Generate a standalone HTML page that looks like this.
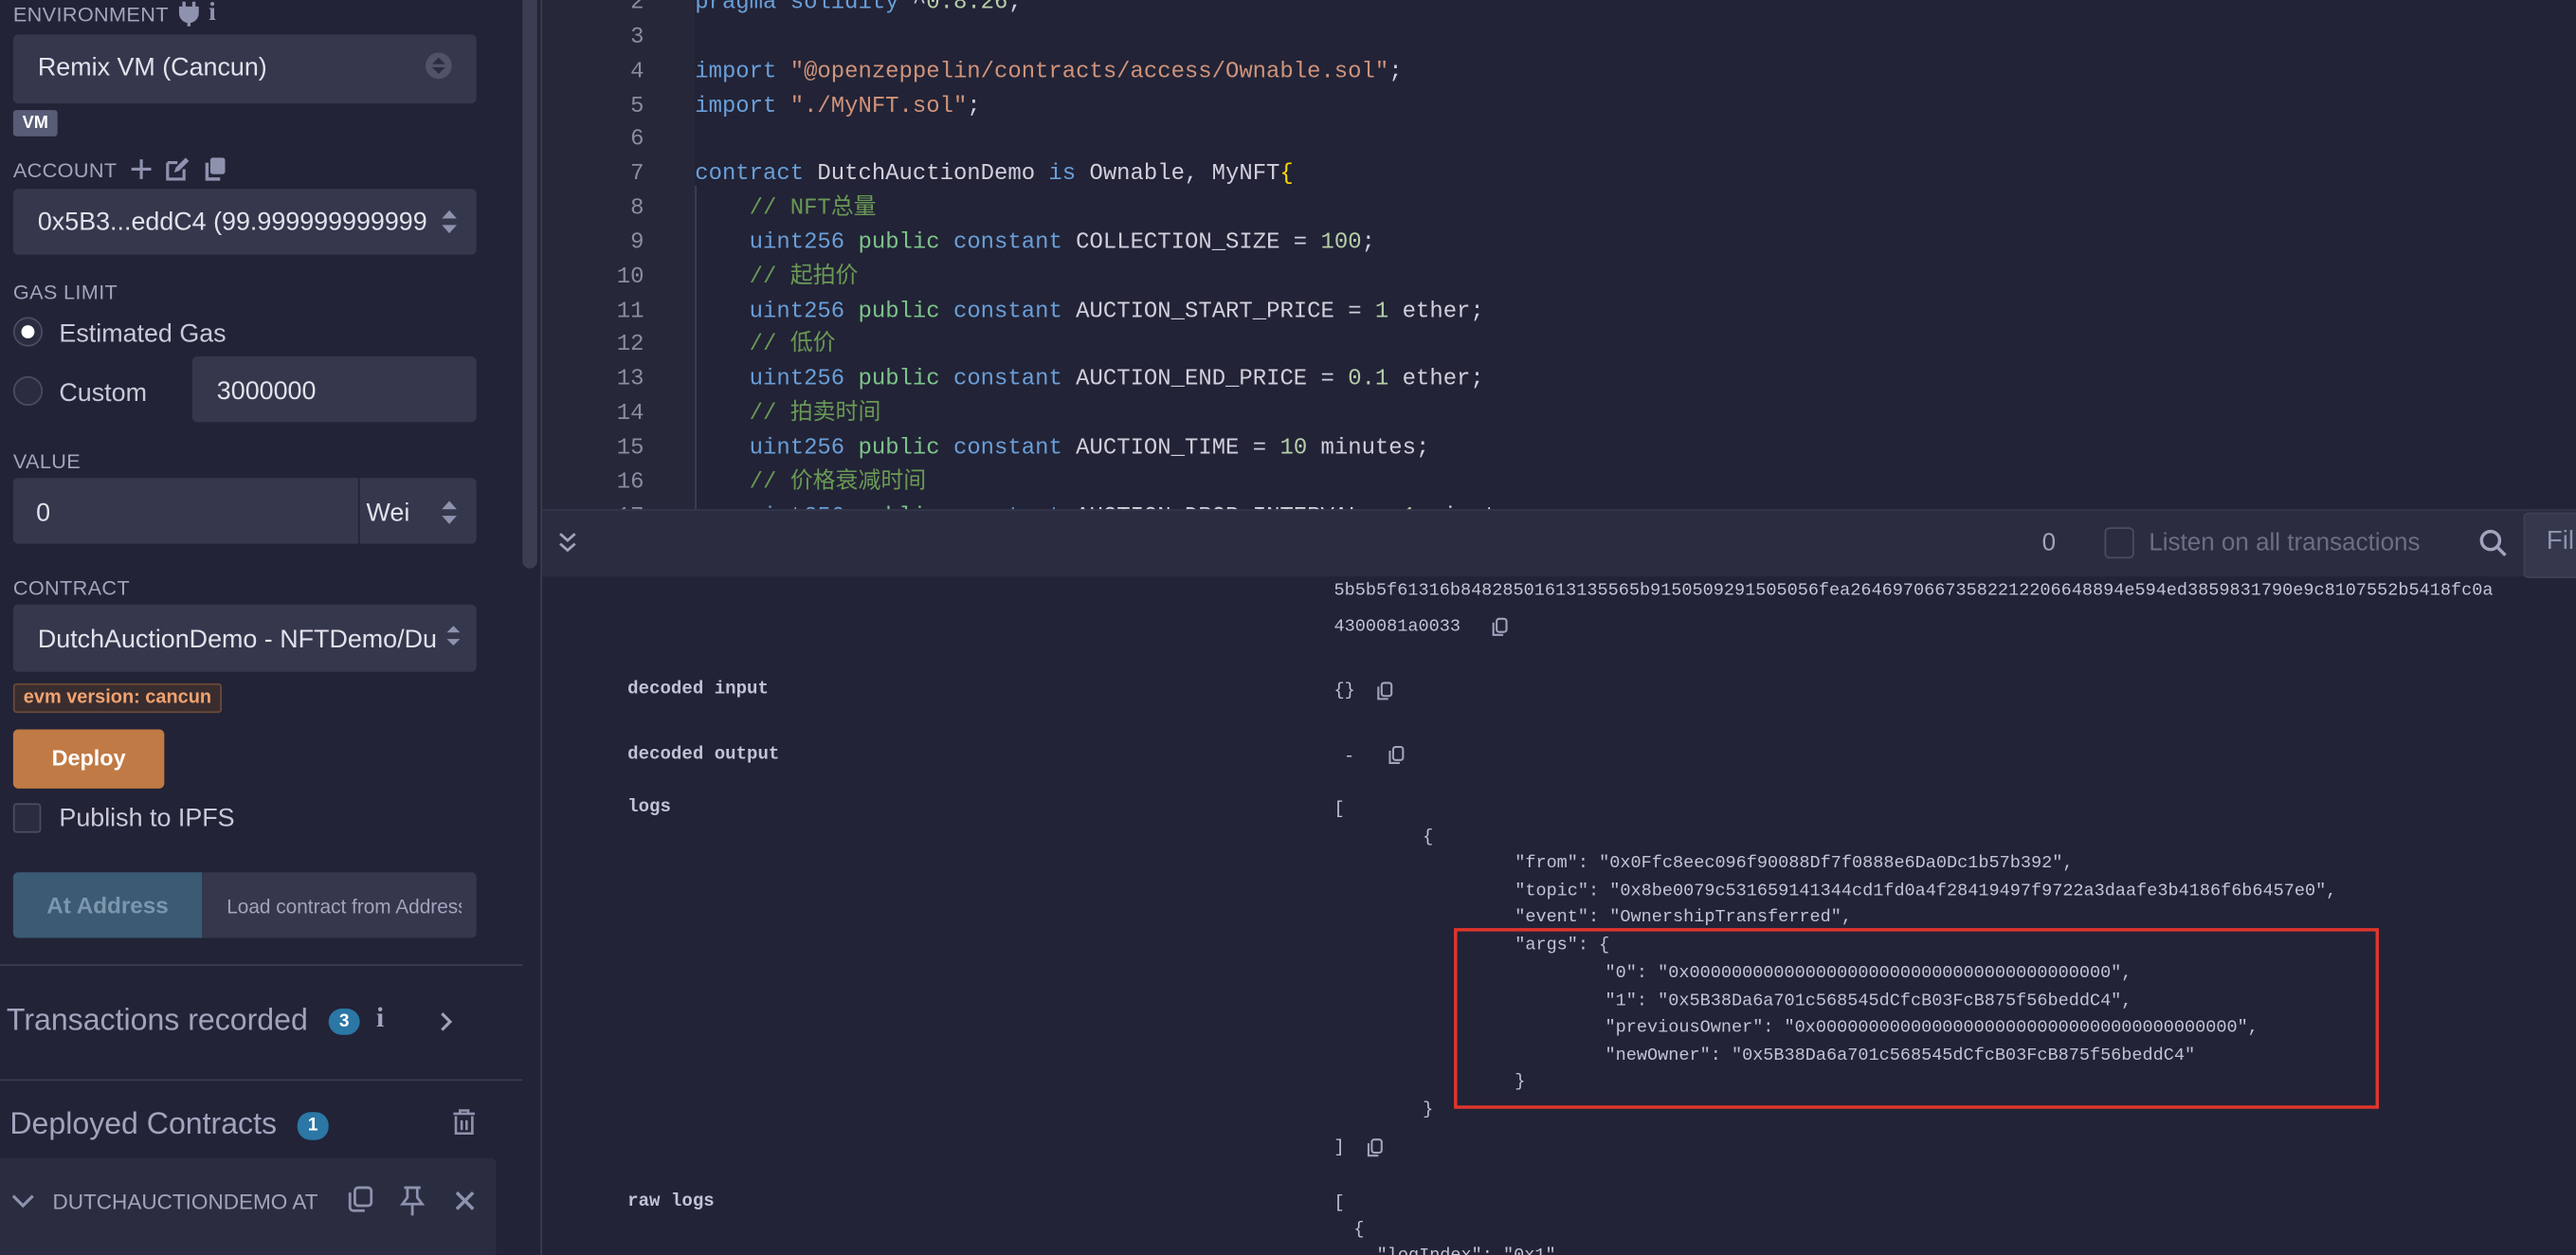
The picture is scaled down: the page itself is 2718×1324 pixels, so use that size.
<!DOCTYPE html>
<html><head><meta charset="utf-8"><style>
html,body{margin:0;padding:0;background:#222336;overflow:hidden;width:2718px;height:1324px}
#s{position:absolute;left:0;top:0;width:1568px;height:764px;transform:scale(1.73342,1.73298);transform-origin:0 0;background:#222336;font-family:"Liberation Sans","Noto Sans CJK SC",sans-serif;overflow:hidden}
.a{position:absolute;white-space:pre}
.lbl{font-size:12.5px;color:#a2a3bd;letter-spacing:.2px}
.box{position:absolute;background:#35374c;border-radius:3px}
.t{font-size:15.5px;color:#e2e2ec}
.mono{font-family:"Liberation Mono","Noto Sans CJK SC",monospace}
.code{font-size:13.8px;line-height:20.85px;color:#d0d0dc}
.ln{font-size:13.8px;color:#8a8ca0;text-align:right;width:40px}
.kw{color:#6a9fd8}.st{color:#d0937a}.cm{color:#6a9955}.nu{color:#b5cea8}.pu{color:#7cc48a}.br{color:#ffd700}
.tm{font-family:"Liberation Mono",monospace;font-size:10.7px;color:#c2c3d4;line-height:16.6px}
.tl{font-family:"Liberation Mono",monospace;font-size:11px;font-weight:bold;color:#c2c3d4}
svg{position:absolute;overflow:visible}
</style></head><body><div id="s">

<!-- sidebar -->
<div class="a lbl" style="left:8px;top:2px">ENVIRONMENT</div>
<svg style="left:109px;top:1px" width="12" height="15" viewBox="0 0 12 15"><path d="M3 0v4M9 0v4M1 4h10v3a5 5 0 0 1-10 0z M6 11v4" stroke="#8f92ae" stroke-width="2" fill="#8f92ae"/></svg>
<div class="a" style="left:127px;top:-1px;font-size:16px;font-weight:bold;color:#8f92ae;font-family:'Liberation Serif',serif">i</div>
<div class="box" style="left:8px;top:21px;width:282px;height:42px"></div>
<div class="a t" style="left:23px;top:33px">Remix VM (Cancun)</div>
<div class="a" style="left:259px;top:32px;width:16px;height:16px;border-radius:50%;background:#4f5268"></div>
<svg style="left:263px;top:35px" width="8" height="10"><path d="M0 4L4 0L8 4ZM0 6L4 10L8 6Z" fill="#2a2c3f"/></svg>
<div class="a" style="left:8px;top:67px;width:27px;height:16px;background:#595c76;border-radius:2px;color:#fff;font-weight:bold;font-size:10.5px;text-align:center;line-height:16px">VM</div>

<div class="a lbl" style="left:8px;top:97px">ACCOUNT</div>
<svg style="left:80px;top:97px" width="12" height="12"><path d="M6 0v12M0 6h12" stroke="#8f92ae" stroke-width="1.8"/></svg>
<svg style="left:101px;top:96px" width="14" height="14"><path d="M1 3h6M1 3v10h10v-6" stroke="#8f92ae" stroke-width="1.8" fill="none"/><path d="M5 9l1-3 6-6 2 2-6 6z" fill="#8f92ae"/></svg>
<svg style="left:124px;top:96px" width="13" height="14"><rect x="4" y="0" width="9" height="10" rx="1.5" fill="#8f92ae"/><path d="M2 3v10h8" stroke="#8f92ae" stroke-width="2" fill="none"/></svg>
<div class="box" style="left:8px;top:115px;width:282px;height:40px"></div>
<div class="a t" style="left:23px;top:127px;width:238px;overflow:hidden">0x5B3...eddC4 (99.999999999999</div>
<svg style="left:269px;top:128px" width="9" height="14"><path d="M0 5L4.5 0L9 5ZM0 9L4.5 14L9 9Z" fill="#8f92ae"/></svg>

<div class="a lbl" style="left:8px;top:171px">GAS LIMIT</div>
<div class="a" style="left:8px;top:193px;width:16px;height:16px;border-radius:50%;border:1.5px solid #4a4d63;background:#2a2c3f"></div>
<div class="a" style="left:13px;top:198px;width:8px;height:8px;border-radius:50%;background:#fff"></div>
<div class="a t" style="left:36px;top:195px;color:#c9cad8">Estimated Gas</div>
<div class="a" style="left:8px;top:229px;width:16px;height:16px;border-radius:50%;border:1.5px solid #4a4d63;background:#2a2c3f"></div>
<div class="a t" style="left:36px;top:231px;color:#c9cad8">Custom</div>
<div class="box" style="left:117px;top:217px;width:173px;height:40px"></div>
<div class="a t" style="left:132px;top:230px">3000000</div>

<div class="a lbl" style="left:8px;top:274px">VALUE</div>
<div class="box" style="left:8px;top:291px;width:210px;height:40px;border-radius:3px 0 0 3px"></div>
<div class="box" style="left:219px;top:291px;width:71px;height:40px;border-radius:0 3px 3px 0"></div>
<div class="a t" style="left:22px;top:304px">0</div>
<div class="a t" style="left:223px;top:304px">Wei</div>
<svg style="left:269px;top:305px" width="9" height="14"><path d="M0 5L4.5 0L9 5ZM0 9L4.5 14L9 9Z" fill="#8f92ae"/></svg>

<div class="a lbl" style="left:8px;top:351px">CONTRACT</div>
<div class="box" style="left:8px;top:368px;width:282px;height:41px"></div>
<div class="a t" style="left:23px;top:381px;width:254px;overflow:hidden">DutchAuctionDemo - NFTDemo/Du</div>
<svg style="left:272px;top:381px" width="8" height="12"><path d="M0 4L4 0L8 4ZM0 8L4 12L8 8Z" fill="#8f92ae"/></svg>
<div class="a" style="left:8px;top:416px;width:125px;height:16px;background:#3a2d2f;border:1px solid #6b4a38;border-radius:2px;color:#f0a36f;font-weight:bold;font-size:11.5px;line-height:16px;text-align:center">evm version: cancun</div>
<div class="a" style="left:8px;top:444px;width:92px;height:36px;background:#c07a45;border-radius:3px;color:#fff;font-weight:bold;font-size:13.5px;line-height:36px;text-align:center">Deploy</div>
<div class="a" style="left:8px;top:489px;width:15px;height:16px;border:1.5px solid #4a4d63;border-radius:2px;background:#2a2c3f"></div>
<div class="a t" style="left:36px;top:490px;color:#c9cad8">Publish to IPFS</div>
<div class="a" style="left:8px;top:531px;width:115px;height:40px;background:#3b5a74;border-radius:3px 0 0 3px;color:#7b97ad;font-weight:bold;font-size:14px;line-height:40px;text-align:center">At Address</div>
<div class="box" style="left:123px;top:531px;width:167px;height:40px;border-radius:0 3px 3px 0"></div>
<div class="a" style="left:138px;top:545px;font-size:12px;color:#a2a3bd;width:143px;overflow:hidden">Load contract from Address</div>
<div class="a" style="left:0;top:587px;width:318px;height:1px;background:#3a3c50"></div>
<div class="a" style="left:4px;top:610px;font-size:18.5px;color:#a2a3bd">Transactions recorded</div>
<div class="a" style="left:200px;top:614px;width:19px;height:16px;border-radius:8px;background:#2b77a6;color:#fff;font-weight:bold;font-size:11px;text-align:center;line-height:16px">3</div>
<div class="a" style="left:229px;top:610px;font-size:17px;font-weight:bold;color:#a2a3bd;font-family:'Liberation Serif',serif">i</div>
<svg style="left:268px;top:616px" width="8" height="12"><path d="M1 1l5 5-5 5" stroke="#a2a3bd" stroke-width="1.8" fill="none"/></svg>
<div class="a" style="left:0;top:657px;width:318px;height:1px;background:#3a3c50"></div>
<div class="a" style="left:6px;top:673px;font-size:18.5px;color:#a2a3bd">Deployed Contracts</div>
<div class="a" style="left:181px;top:677px;width:19px;height:17px;border-radius:8px;background:#2b77a6;color:#fff;font-weight:bold;font-size:11px;text-align:center;line-height:17px">1</div>
<svg style="left:276px;top:676px" width="13" height="15"><path d="M0 2h13M4 2V0h5v2M1.5 3.5v10.5h10V3.5M5 6v6M8 6v6" stroke="#8f92ae" stroke-width="1.5" fill="none"/></svg>
<div class="a" style="left:0;top:705px;width:302px;height:70px;background:#2a2c3f;border-radius:0 3px 0 0"></div>
<svg style="left:7px;top:727px" width="14" height="8"><path d="M1 1l6 6 6-6" stroke="#8f92ae" stroke-width="1.8" fill="none"/></svg>
<div class="a" style="left:32px;top:724px;font-size:13px;color:#a2a3bd">DUTCHAUCTIONDEMO AT</div>
<svg style="left:211px;top:722px" width="16" height="17"><rect x="5" y="1" width="10" height="11" rx="2" stroke="#8f92ae" stroke-width="1.6" fill="none"/><path d="M2 4v9a2 2 0 0 0 2 2h7" stroke="#8f92ae" stroke-width="1.6" fill="none"/></svg>
<svg style="left:244px;top:722px" width="14" height="18"><path d="M2 1h10M4 1v6l-3 4h12l-3-4V1M7 11v7" stroke="#8f92ae" stroke-width="1.6" fill="none"/></svg>
<svg style="left:277px;top:725px" width="12" height="12"><path d="M1 1l10 10M11 1L1 11" stroke="#8f92ae" stroke-width="2" fill="none"/></svg>
<!-- scrollbar -->
<div class="a" style="left:318px;top:0;width:9px;height:346px;background:#3b3d52;border-radius:0 0 5px 5px"></div>
<div class="a" style="left:329px;top:0;width:1px;height:764px;background:#3a3c50"></div>

<!-- editor -->
<div class="a" style="left:330px;top:0;width:93px;height:310px;background:#262839"></div>
<div class="a" style="left:423px;top:113px;width:1px;height:197px;background:#3e4055"></div>
<div class="a mono ln" style="left:352px;top:-7px;line-height:20.85px">2
3
4
5
6
7
8
9
10
11
12
13
14
15
16
17</div>
<div class="a mono code" style="left:423px;top:-7px"><span class="kw">pragma</span> <span class="kw">solidity</span> ^<span class="nu">0.8.26</span>;

<span class="kw">import</span> <span class="st">"@openzeppelin/contracts/access/Ownable.sol"</span>;
<span class="kw">import</span> <span class="st">"./MyNFT.sol"</span>;

<span class="kw">contract</span> DutchAuctionDemo <span class="kw">is</span> Ownable, MyNFT<span class="br">{</span>
    <span class="cm">// NFT总量</span>
    <span class="kw">uint256</span> <span class="pu">public</span> <span class="kw">constant</span> COLLECTION_SIZE = <span class="nu">100</span>;
    <span class="cm">// 起拍价</span>
    <span class="kw">uint256</span> <span class="pu">public</span> <span class="kw">constant</span> AUCTION_START_PRICE = <span class="nu">1</span> ether;
    <span class="cm">// 低价</span>
    <span class="kw">uint256</span> <span class="pu">public</span> <span class="kw">constant</span> AUCTION_END_PRICE = <span class="nu">0.1</span> ether;
    <span class="cm">// 拍卖时间</span>
    <span class="kw">uint256</span> <span class="pu">public</span> <span class="kw">constant</span> AUCTION_TIME = <span class="nu">10</span> minutes;
    <span class="cm">// 价格衰减时间</span>
    <span class="kw">uint256</span> <span class="pu">public</span> <span class="kw">constant</span> AUCTION_DROP_INTERVAL = <span class="nu">1</span> minutes;</div>

<!-- terminal bar -->
<div class="a" style="left:330px;top:310px;width:1238px;height:40px;background:#2a2c3f;border-top:1px solid #33354a"></div>
<svg style="left:340px;top:324px" width="11" height="12"><path d="M1 1l4.5 4 4.5-4M1 7l4.5 4 4.5-4" stroke="#a2a3bd" stroke-width="1.6" fill="none"/></svg>
<div class="a" style="left:1243px;top:322px;font-size:15px;color:#a2a3bd">0</div>
<div class="a" style="left:1281px;top:321px;width:16px;height:17px;border:1.5px solid #4a4d63;border-radius:3px;background:#2a2c3f"></div>
<div class="a" style="left:1308px;top:322px;font-size:15px;color:#6c6e85">Listen on all transactions</div>
<svg style="left:1509px;top:322px" width="17" height="17"><circle cx="7" cy="7" r="5.5" stroke="#a2a3bd" stroke-width="2" fill="none"/><path d="M11 11l5 5" stroke="#a2a3bd" stroke-width="2"/></svg>
<div class="a" style="left:1536px;top:312px;width:40px;height:38px;background:#35374c;border:1px solid #3e4055;border-radius:3px"></div>
<div class="a" style="left:1550px;top:321px;font-size:16px;color:#8f92ae">Fil</div>

<!-- terminal content -->
<div class="a tm" style="left:812px;top:352px">5b5b5f61316b84828501613135565b9150509291505056fea26469706673582212206648894e594ed3859831790e9c8107552b5418fc0a</div>
<div class="a tm" style="left:812px;top:374px">4300081a0033</div>
<svg style="left:908px;top:376px" width="10" height="12"><rect x="3" y="0.7" width="6" height="8" rx="1.5" stroke="#a2a3bd" stroke-width="1.2" fill="none"/><path d="M1 3v7.5h6" stroke="#a2a3bd" stroke-width="1.2" fill="none"/></svg>
<div class="a tl" style="left:382px;top:414px">decoded input</div>
<div class="a tm" style="left:812px;top:413px">{}</div>
<svg style="left:838px;top:415px" width="10" height="12"><rect x="3" y="0.7" width="6" height="8" rx="1.5" stroke="#a2a3bd" stroke-width="1.2" fill="none"/><path d="M1 3v7.5h6" stroke="#a2a3bd" stroke-width="1.2" fill="none"/></svg>
<div class="a tl" style="left:382px;top:454px">decoded output</div>
<div class="a tm" style="left:818px;top:453px">-</div>
<svg style="left:845px;top:454px" width="10" height="12"><rect x="3" y="0.7" width="6" height="8" rx="1.5" stroke="#a2a3bd" stroke-width="1.2" fill="none"/><path d="M1 3v7.5h6" stroke="#a2a3bd" stroke-width="1.2" fill="none"/></svg>
<div class="a tl" style="left:382px;top:486px">logs</div>
<div class="a tm" style="left:812px;top:485px">[</div>
<div class="a tm" style="left:866px;top:502px">{</div>
<div class="a tm" style="left:922px;top:518px">"from": "0x0Ffc8eec096f90088Df7f0888e6Da0Dc1b57b392",
"topic": "0x8be0079c531659141344cd1fd0a4f28419497f9722a3daafe3b4186f6b6457e0",
"event": "OwnershipTransferred",
"args": {</div>
<div class="a tm" style="left:977px;top:585px">"0": "0x0000000000000000000000000000000000000000",
"1": "0x5B38Da6a701c568545dCfcB03FcB875f56beddC4",
"previousOwner": "0x0000000000000000000000000000000000000000",
"newOwner": "0x5B38Da6a701c568545dCfcB03FcB875f56beddC4"</div>
<div class="a tm" style="left:922px;top:651px">}</div>
<div class="a tm" style="left:866px;top:668px">}</div>
<div class="a tm" style="left:812px;top:691px">]</div>
<svg style="left:832px;top:693px" width="10" height="12"><rect x="3" y="0.7" width="6" height="8" rx="1.5" stroke="#a2a3bd" stroke-width="1.2" fill="none"/><path d="M1 3v7.5h6" stroke="#a2a3bd" stroke-width="1.2" fill="none"/></svg>
<div class="a" style="left:885px;top:565px;width:559px;height:106px;border:2px solid #e0352b"></div>
<div class="a tl" style="left:382px;top:726px">raw logs</div>
<div class="a tm" style="left:812px;top:725px">[</div>
<div class="a tm" style="left:824px;top:741px">{</div>
<div class="a tm" style="left:838px;top:757px">"logIndex": "0x1",</div>
</div></body></html>
